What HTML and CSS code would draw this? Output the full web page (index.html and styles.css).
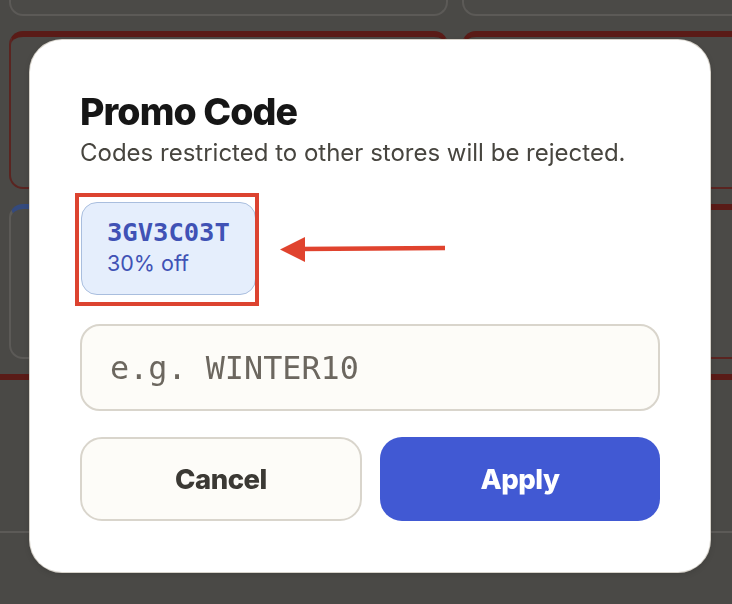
FILE: index.html
```html
<!DOCTYPE html>
<html lang="en">
<head>
<meta charset="utf-8">
<title>Promo Code</title>
<link rel="stylesheet" href="styles.css">
</head>
<body>
<div class="page">
  <div class="grid">
    <div class="card card-top"></div>
    <div class="card card-top card-right"></div>
    <div class="card card-red"></div>
    <div class="card card-red card-right"></div>
    <div class="card card-blue"></div>
    <div class="card card-red card-right"></div>
  </div>
  <div class="band"></div>
  <div class="footer"></div>
</div>

<div class="backdrop">
  <div class="modal">
    <h1 class="title">Promo Code</h1>
    <p class="subtitle">Codes restricted to other stores will be rejected.</p>
    <div class="chip-row">
      <div class="chip">
        <div class="chip-code">3GV3C03T</div>
        <div class="chip-off">30% off</div>
      </div>
      <div class="highlight"></div>
      <svg class="arrow" width="170" height="30" viewBox="0 0 170 30">
        <line x1="20" y1="14" x2="165" y2="13" stroke="#e0432e" stroke-width="4.5" stroke-linecap="butt"/>
        <polygon points="0,14.5 25,2 25,27" fill="#e0432e"/>
      </svg>
    </div>
    <div class="input">e.g. WINTER10</div>
    <div class="actions">
      <div class="btn btn-cancel">Cancel</div>
      <div class="btn btn-apply">Apply</div>
    </div>
  </div>
</div>
</body>
</html>
```

FILE: styles.css
```css
html, body {
  margin: 0;
  padding: 0;
  height: 100%;
  overflow: hidden;
  background: #4a4946;
  font-family: Inter, "Noto Sans", sans-serif;
}

.page {
  width: 732px;
  height: 604px;
  display: flex;
  flex-direction: column;
  overflow: hidden;
}

.grid {
  display: grid;
  grid-template-columns: 439px 1fr;
  grid-template-rows: 16px 158px 155px;
  column-gap: 14px;
  row-gap: 15px;
  padding-left: 9px;
}

.card {
  box-sizing: border-box;
  border: 2px solid #5c5a57;
  border-radius: 14px;
  background: #4b4a47;
}

.card-top {
  border-top: none;
  border-radius: 0 0 14px 14px;
}

.card-red {
  border-color: #5a2420;
  border-top: 6px solid #5a1b17;
}

.card-blue {
  border-top: 5px solid #344a7e;
}

.card-right {
  border-right: none;
  border-top-right-radius: 0;
  border-bottom-right-radius: 0;
}

.band {
  margin-top: 15px;
  height: 151px;
  border-top: 6px solid #5a1b17;
}

.footer {
  flex: 1;
  border-top: 2px solid #5c5a57;
}

.backdrop {
  position: fixed;
  inset: 0;
}

.modal {
  position: absolute;
  left: 30px;
  top: 40px;
  width: 680px;
  height: 532px;
  box-sizing: border-box;
  padding: 50px 50px 0 50px;
  background: #ffffff;
  border-radius: 32px;
  box-shadow: 0 0 0 1px #d6d2ca, 0 2px 6px rgba(0,0,0,0.15);
}

.title {
  margin: 0;
  font-size: 37.5px;
  line-height: 44px;
  font-weight: 800;
  letter-spacing: -0.9px;
  color: #161616;
}

.subtitle {
  margin: 4px 0 0 0;
  font-size: 24px;
  line-height: 30px;
  color: #47453f;
}

.chip-row {
  position: relative;
  margin-top: 34px;
  display: flex;
}

.chip {
  box-sizing: border-box;
  width: 175px;
  height: 93px;
  margin-left: 1px;
  padding: 14px 0 0 25px;
  background: #e5eefc;
  border: 1.5px solid #a9bede;
  border-radius: 16px;
  color: #4052b5;
}

.chip-code {
  font-family: "DejaVu Sans Mono", monospace;
  font-weight: 700;
  font-size: 25.5px;
  line-height: 30px;
}

.chip-off {
  margin-top: 3px;
  font-size: 21.5px;
  line-height: 26px;
}

.highlight {
  position: absolute;
  left: -5px;
  top: -9px;
  width: 184px;
  height: 113px;
  box-sizing: border-box;
  border: 4px solid #dc4330;
}

.arrow {
  position: absolute;
  left: 200px;
  top: 33px;
}

.input {
  box-sizing: border-box;
  margin-top: 29px;
  height: 87px;
  padding-left: 28px;
  display: flex;
  align-items: center;
  background: #fdfcf8;
  border: 2px solid #d9d5cc;
  border-radius: 20px;
  font-family: "DejaVu Sans Mono", monospace;
  font-size: 31.8px;
  color: #6c675f;
}

.actions {
  margin-top: 26px;
  display: grid;
  grid-template-columns: 282px 1fr;
  column-gap: 18px;
}

.btn {
  box-sizing: border-box;
  height: 84px;
  display: flex;
  align-items: center;
  justify-content: center;
  border-radius: 22px;
  font-size: 27.5px;
  font-weight: 800;
  letter-spacing: -0.5px;
}

.btn-cancel {
  background: #fdfcf8;
  border: 2px solid #d9d5cc;
  color: #3b3934;
}

.btn-apply {
  background: #4159d3;
  color: #ffffff;
}
```
